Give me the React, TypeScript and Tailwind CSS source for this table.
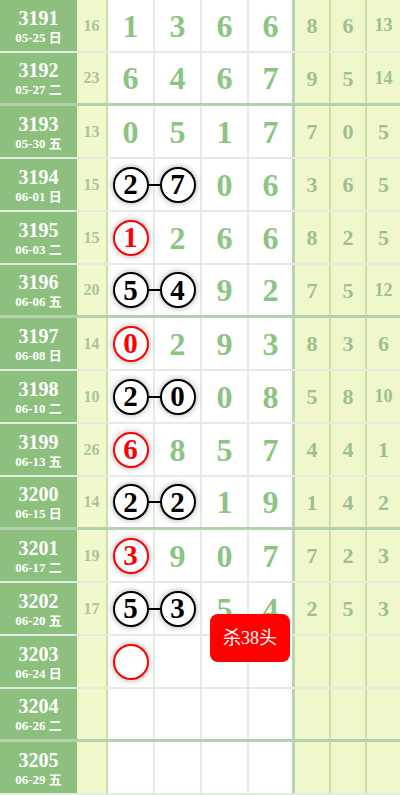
import React from 'react';

type Ball = { n: string; red?: boolean };
type Cell = string | Ball | null;

interface Row {
  id: string;
  date: string;
  sum: string;
  main: Cell[];
  link?: boolean;
  tail: string[];
}

const rows: Row[] = [
  { id: '3191', date: '05-25 日', sum: '16', main: ['1', '3', '6', '6'], tail: ['8', '6', '13'] },
  { id: '3192', date: '05-27 二', sum: '23', main: ['6', '4', '6', '7'], tail: ['9', '5', '14'] },
  { id: '3193', date: '05-30 五', sum: '13', main: ['0', '5', '1', '7'], tail: ['7', '0', '5'] },
  { id: '3194', date: '06-01 日', sum: '15', main: [{ n: '2' }, { n: '7' }, '0', '6'], link: true, tail: ['3', '6', '5'] },
  { id: '3195', date: '06-03 二', sum: '15', main: [{ n: '1', red: true }, '2', '6', '6'], tail: ['8', '2', '5'] },
  { id: '3196', date: '06-06 五', sum: '20', main: [{ n: '5' }, { n: '4' }, '9', '2'], link: true, tail: ['7', '5', '12'] },
  { id: '3197', date: '06-08 日', sum: '14', main: [{ n: '0', red: true }, '2', '9', '3'], tail: ['8', '3', '6'] },
  { id: '3198', date: '06-10 二', sum: '10', main: [{ n: '2' }, { n: '0' }, '0', '8'], link: true, tail: ['5', '8', '10'] },
  { id: '3199', date: '06-13 五', sum: '26', main: [{ n: '6', red: true }, '8', '5', '7'], tail: ['4', '4', '1'] },
  { id: '3200', date: '06-15 日', sum: '14', main: [{ n: '2' }, { n: '2' }, '1', '9'], link: true, tail: ['1', '4', '2'] },
  { id: '3201', date: '06-17 二', sum: '19', main: [{ n: '3', red: true }, '9', '0', '7'], tail: ['7', '2', '3'] },
  { id: '3202', date: '06-20 五', sum: '17', main: [{ n: '5' }, { n: '3' }, '5', '4'], link: true, tail: ['2', '5', '3'] },
  { id: '3203', date: '06-24 日', sum: '', main: [{ n: '', red: true }, null, null, null], tail: ['', '', ''] },
  { id: '3204', date: '06-26 二', sum: '', main: [null, null, null, null], tail: ['', '', ''] },
  { id: '3205', date: '06-29 五', sum: '', main: [null, null, null, null], tail: ['', '', ''] },
];

function BallView({ b, link }: { b: Ball; link?: boolean }) {
  return (
    <div className="relative">
      {link && <div className="absolute left-[34px] top-[17px] w-[14px] h-[2px] bg-black z-0" />}
      <div
        className={
          'relative z-10 w-[36px] h-[36px] rounded-full bg-white border-2 flex items-center justify-center shadow-[0_0_6px_rgba(0,0,0,0.35)] text-[29px] font-bold leading-none ' +
          (b.red ? 'border-[#ff0000] text-[#ff0000]' : 'border-black text-black')
        }
      >
        {b.n}
      </div>
    </div>
  );
}

export default function App() {
  return (
    <div className="relative w-[400px] h-[795px] overflow-hidden bg-white" style={{ fontFamily: '"Liberation Serif", "Noto Sans CJK SC", serif' }}>
      {rows.map((r, i) => {
        const thick = i % 4 === 1;
        return (
          <div
            key={r.id}
            className={
              'flex h-[53px] ' +
              (thick ? 'border-b-[3px] border-[rgba(90,150,70,0.45)]' : 'border-b-2 border-[rgba(110,160,100,0.2)]')
            }
          >
            <div className="w-[77px] shrink-0 bg-[#8dc07e] flex flex-col items-center justify-center text-white font-bold pt-[2px]">
              <div className="text-[20px] leading-[21px]">{r.id}</div>
              <div className="text-[13px] leading-[17px]">{r.date}</div>
            </div>
            <div className="w-[31px] shrink-0 bg-[#f0f8cc] border-r-2 border-[rgba(120,170,90,0.3)] flex items-center justify-center text-[16px] font-bold text-[#a9c49c]">
              {r.sum}
            </div>
            {r.main.map((c, j) => (
              <div
                key={j}
                className={
                  'shrink-0 flex items-center justify-center ' +
                  (j === 3 ? 'w-[46px] border-r-[3px] border-[rgba(100,160,80,0.45)]' : 'w-[47px] border-r-2 border-[rgba(110,160,100,0.2)]')
                }
              >
                {c === null ? null : typeof c === 'string' ? (
                  <span className="text-[32px] font-bold text-[#8cc482] leading-none">{c}</span>
                ) : (
                  <BallView b={c} link={r.link && j === 0} />
                )}
              </div>
            ))}
            {r.tail.map((t, j) => (
              <div
                key={j}
                className={
                  'shrink-0 bg-[#eff7cb] flex items-center justify-center font-bold text-[#9fbe93] ' +
                  (j < 2 ? 'w-[36px] border-r-2 border-[rgba(120,170,90,0.3)] ' : 'flex-1 ') +
                  (t.length > 1 ? 'text-[18px]' : 'text-[22px]')
                }
              >
                {t}
              </div>
            ))}
          </div>
        );
      })}
      <div className="absolute left-[210px] top-[614px] w-[80px] h-[48px] rounded-[8px] bg-[#ff0000] text-white text-[18px] flex items-center justify-center">
        杀38头
      </div>
    </div>
  );
}
